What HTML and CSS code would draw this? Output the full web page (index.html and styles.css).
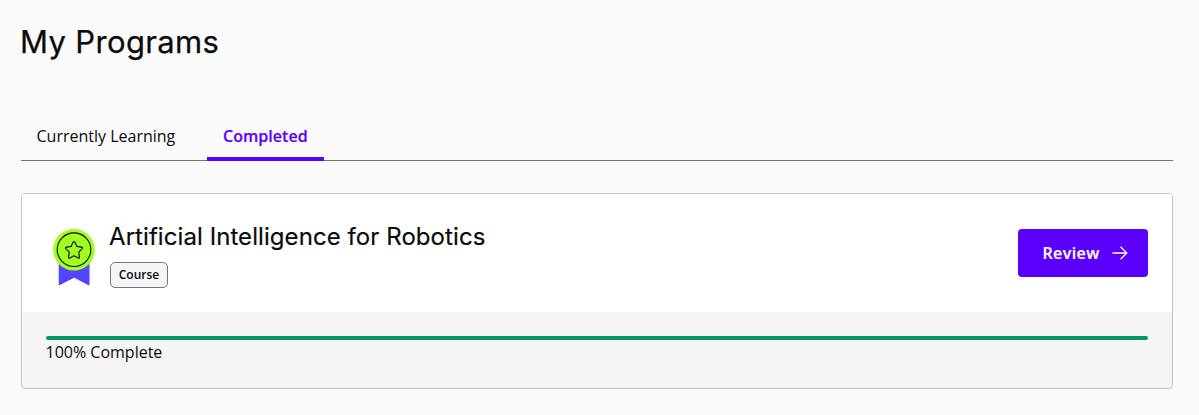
FILE: index.html
```html
<!DOCTYPE html>
<html lang="en">
<head>
<meta charset="utf-8">
<title>My Programs</title>
<link rel="stylesheet" href="styles.css">
</head>
<body>
<main class="page">
  <h1 class="title">My Programs</h1>
  <nav class="tabs">
    <a class="tab">Currently Learning</a>
    <a class="tab tab-active">Completed</a>
  </nav>
  <article class="card">
    <div class="card-main">
      <svg class="badge" width="42" height="58" viewBox="0 0 42 58">
        <path d="M5.700 30h30.800v25.200q0 1.500-1.300.8l-14.100-7.200-14.100 7.200q-1.300.7-1.300-.8z" fill="#5345ff"/>
        <circle cx="21" cy="20.700" r="20.800" fill="#a0ff1f"/>
        <circle cx="21" cy="20.700" r="16.800" fill="none" stroke="#0b0b0b" stroke-width="1.100"/>
        <path d="M20 13.200q1-1.500 2 0l1.900 4.200 4.600.7q1.700.4.600 1.700l-3.400 3.400.8 4.700q.1 1.700-1.400 1l-4.100-2.200-4.100 2.200q-1.500.7-1.400-1l.8-4.700-3.400-3.400q-1.100-1.300.6-1.700l4.600-.7z" fill="none" stroke="#0b0b0b" stroke-width="1.100" stroke-linejoin="round"/>
      </svg>
      <div class="info">
        <h2 class="name">Artificial Intelligence for Robotics</h2>
        <span class="tag">Course</span>
      </div>
      <button class="review">Review
        <svg width="16" height="16" viewBox="0 0 16 16" fill="none" stroke="#fff" stroke-width="1.300"><path d="M.5 8h14M8.500 1.700L14.800 8l-6.300 6.300"/></svg>
      </button>
    </div>
    <div class="card-foot">
      <div class="bar"></div>
      <p class="status">100% Complete</p>
    </div>
  </article>
</main>
</body>
</html>
```

FILE: styles.css
```css
* { box-sizing: border-box; }
body { margin: 0; background: #fafafa; color: #0b0b0b; font-family: "Open Sans", sans-serif; font-size: 16px; }
.page { padding: 22px 26px 0 21px; }
.title { margin: 0 0 0 -1px; height: 90px; font: 400 31px/39px Inter, sans-serif; letter-spacing: 0.35px; -webkit-text-stroke: 0.25px #0b0b0b; }
.tabs { display: flex; height: 49px; border-bottom: 1px solid #777; }
.tab { width: 186px; height: 49px; padding: 12px 0 0 15.5px; line-height: 24px; }
.tab-active { width: 117px; padding-left: 16px; color: #5b00ff; font-weight: 600; letter-spacing: 0.05px; -webkit-text-stroke: 0.2px #5b00ff; border-bottom: 4px solid #5b00ff; }
.card { margin-top: 32px; height: 196px; border: 1px solid #c4c4c4; border-radius: 4px; background: #f5f5f5; overflow: hidden; }
.card-main { display: flex; height: 118px; padding: 35px 24px 0 31px; background: #fff; }
.badge { flex: none; }
.info { flex: 1; padding-left: 15px; margin-top: -8px; }
.name { margin: 0 0 9px -1px; font: 400 24px/32px Inter, sans-serif; letter-spacing: 0.07px; -webkit-text-stroke: 0.2px #0b0b0b; }
.tag { display: block; width: 58px; height: 26px; border: 1px solid #777; border-radius: 5px; background: #f5f5f5; font-size: 12px; font-weight: 600; line-height: 24px; text-align: center; }
.review { display: flex; align-items: center; gap: 12.5px; width: 130px; height: 48px; padding: 0 0 0 24.5px; border: 0; border-radius: 4px; background: #5b00ff; color: #fff; font: 600 16px "Open Sans", sans-serif; letter-spacing: 0.4px; -webkit-text-stroke: 0.2px #fff; }
.card-foot { padding: 24px 24px 0; }
.bar { height: 4px; border-radius: 2px; background: #029663; }
.status { margin: 0 0 0 -0.5px; line-height: 24px; }
```
